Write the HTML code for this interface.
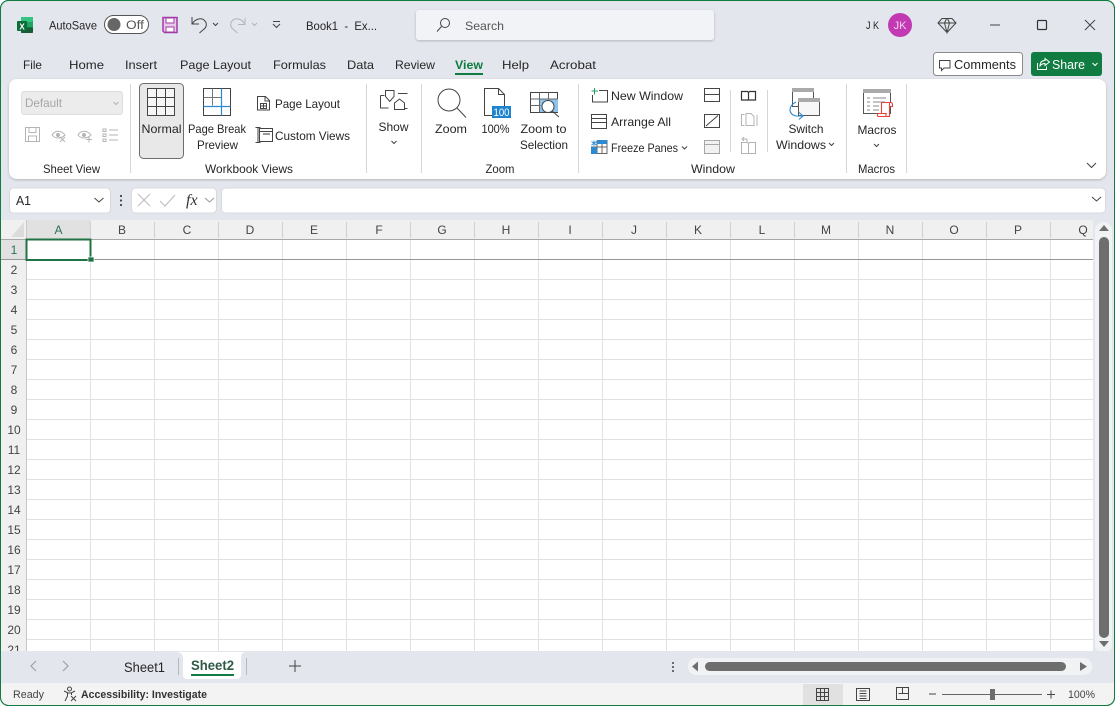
<!DOCTYPE html>
<html><head><meta charset="utf-8"><style>
html,body{margin:0;padding:0;width:1115px;height:706px;overflow:hidden;background:#fff}
svg{display:block}
text{font-family:"Liberation Sans",sans-serif;font-size:12px;fill:#262626}
.c{text-anchor:middle}
.g text{fill:#444;font-size:12px;text-anchor:middle}
.i{fill:none;stroke:#444;stroke-width:1}
.d{fill:none;stroke:#b4b4b4;stroke-width:1}
</style></head><body>
<svg width="1115" height="706" viewBox="0 0 1115 706" xmlns="http://www.w3.org/2000/svg">
<defs>
<filter id="s" x="-2%" y="-5%" width="104%" height="112%"><feDropShadow dx="0" dy="1" stdDeviation="1.2" flood-color="#000" flood-opacity=".22"/></filter>
<pattern id="gv" x="26" y="0" width="64" height="20" patternUnits="userSpaceOnUse"><rect x="0" y="0" width="1" height="20" fill="#e1e1e1"/></pattern>
<pattern id="gh" x="0" y="239" width="64" height="20" patternUnits="userSpaceOnUse"><rect x="0" y="0" width="64" height="1" fill="#e1e1e1"/></pattern>
</defs>
<rect x=".5" y=".5" width="1114" height="705" rx="8" fill="#e3e6ec" stroke="#107c41"/>

<!-- title bar -->
<rect x="21" y="17" width="12" height="16" rx="1" fill="#107c41"/><rect x="21" y="17" width="12" height="5" rx="1" fill="#33c481"/><rect x="27" y="22" width="6" height="5" fill="#21a366"/><rect x="21" y="28" width="12" height="5" rx="1" fill="#185c37"/>
<rect x="17" y="21" width="10" height="10" rx="1" fill="#0e6b3a"/>
<text x="22" y="29.500" class="c" style="font-size:8px;font-weight:bold;fill:#fff">X</text>
<text x="49" y="29.500" textLength="48" lengthAdjust="spacingAndGlyphs">AutoSave</text>
<rect x="104.500" y="15.500" width="44" height="18" rx="9" fill="#fff" stroke="#555"/><circle cx="114" cy="24.500" r="6.500" fill="#666"/>
<text x="126" y="29" textLength="18" lengthAdjust="spacingAndGlyphs" style="font-size:11.500px;fill:#555">Off</text>
<path d="M163 17.500h14l0 15h-12.500l-1.500-1.500z" fill="#e8c9ec" stroke="#a03aa8" stroke-width="1.500"/><rect x="166" y="18" width="8" height="5" fill="#fff" stroke="#a03aa8"/><rect x="166" y="27" width="8" height="5" fill="#fff" stroke="#a03aa8"/>
<path d="M192 17v7h7M192.500 23.500c3-5 9-6 12-3 3 3 2 7-1 9l-4 3.500" class="i" stroke-width="1.200"/>
<path d="M213 23l2.500 2.500 2.500-2.500" class="i"/>
<path d="M245 18v6.500h-7M244.500 23.500c-3-5-9-6-12-3-3 3-2 7 1 9l4 3.500" class="d" stroke-width="1.200"/>
<path d="M252 23l2.500 2.500 2.500-2.500" class="d"/>
<path d="M273 21.500h7M273 24l3.500 3.500 3.500-3.500" class="i"/>
<text x="306" y="30" textLength="71" lengthAdjust="spacingAndGlyphs">Book1&#160;&#160;-&#160;&#160;Ex...</text>
<rect x="416" y="10" width="298" height="30" rx="3" fill="#f1f3f6" filter="url(#s)"/>
<circle cx="445" cy="23" r="4.500" class="i"/><path d="M441.500 26.500l-4.500 5" class="i"/>
<text x="465" y="30" textLength="39" lengthAdjust="spacingAndGlyphs" style="fill:#555">Search</text>
<text x="866" y="29" textLength="13" lengthAdjust="spacingAndGlyphs" style="font-size:11px">J K</text>
<circle cx="900" cy="25" r="12" fill="#c239b3"/><text x="900" y="29" class="c" style="font-size:11px;fill:#f3d4ef">JK</text>
<path d="M942 18.500h10l4 4.500-9 9.500-9-9.500zM938 23h18M944.500 23l2.500 9.500 2.500-9.500M944.500 23l2-4.500h1l2 4.500" class="i" stroke="#333"/>
<path d="M990 25h10" class="i" stroke-width="1.200"/>
<rect x="1037.500" y="20.500" width="9" height="9" rx="1" fill="none" stroke="#333" stroke-width="1.200"/>
<path d="M1085 20l10 10M1095 20l-10 10" class="i" stroke-width="1.100"/>

<!-- tabs -->
<g style="font-size:13px">
<text x="23" y="69" textLength="19" lengthAdjust="spacingAndGlyphs">File</text>
<text x="69" y="69" textLength="35" lengthAdjust="spacingAndGlyphs">Home</text>
<text x="125" y="69" textLength="32" lengthAdjust="spacingAndGlyphs">Insert</text>
<text x="180" y="69" textLength="71" lengthAdjust="spacingAndGlyphs">Page Layout</text>
<text x="273" y="69" textLength="53" lengthAdjust="spacingAndGlyphs">Formulas</text>
<text x="347" y="69" textLength="27" lengthAdjust="spacingAndGlyphs">Data</text>
<text x="395" y="69" textLength="40" lengthAdjust="spacingAndGlyphs">Review</text>
<text x="455" y="69" textLength="28" lengthAdjust="spacingAndGlyphs" style="font-weight:bold;fill:#107c41">View</text>
<text x="502" y="69" textLength="27" lengthAdjust="spacingAndGlyphs">Help</text>
<text x="550" y="69" textLength="46" lengthAdjust="spacingAndGlyphs">Acrobat</text>
</g>
<rect x="455" y="73" width="28" height="2" fill="#107c41"/>
<rect x="933.500" y="52.500" width="89" height="23" rx="3" fill="#fff" stroke="#8a8a8a"/>
<path d="M939.500 60.500h10.500v7.500h-6l-2.500 2.500v-2.500h-2z" class="i"/>
<text x="954" y="69" textLength="62" lengthAdjust="spacingAndGlyphs" style="font-size:13px">Comments</text>
<rect x="1031" y="52" width="71" height="24" rx="3" fill="#107c41"/>
<path d="M1037.500 63v6.500h9v-3M1040 66c0-4 2-5.500 5-5.500v-2l4.500 3.500-4.500 3.500v-2c-2 0-4 1-5 2.500z" fill="none" stroke="#fff"/>
<text x="1052" y="69" textLength="33" lengthAdjust="spacingAndGlyphs" style="font-size:13px;fill:#fff">Share</text>
<path d="M1092.500 63l2.500 2.500 2.500-2.500" fill="none" stroke="#fff"/>

<!-- ribbon -->
<rect x="9" y="79" width="1097" height="100" rx="8" fill="#fff" filter="url(#s)"/>
<g fill="#d6d6d6"><rect x="130" y="84" width="1" height="89"/><rect x="366" y="84" width="1" height="89"/><rect x="421" y="84" width="1" height="89"/><rect x="578" y="84" width="1" height="89"/><rect x="846" y="84" width="1" height="89"/><rect x="906" y="84" width="1" height="89"/><rect x="767" y="90" width="1" height="62"/><rect x="730" y="90" width="1" height="62"/></g>

<!-- sheet view -->
<rect x="21.500" y="91.500" width="101" height="23" rx="3" fill="#ececec" stroke="#dcdcdc"/>
<text x="25" y="107" textLength="37" lengthAdjust="spacingAndGlyphs" style="fill:#a6a6a6">Default</text>
<path d="M113.500 102l2.500 2.500 2.500-2.500" class="d"/>
<path d="M25.500 127.500h14v14h-14zM29 127.500v5h7v-5M28.500 141.500v-5.500h8v5.500" class="d" stroke-width="1.100"/>
<path d="M52 135c3-5 9-5 13 0-4 4-10 4-13 0z" class="d"/><circle cx="58" cy="135" r="2" fill="#b4b4b4"/><path d="M60 137l5 5M65 137l-5 5" class="d"/>
<path d="M78 135c3-5 9-5 13 0-4 4-10 4-13 0z" class="d"/><circle cx="84" cy="135" r="2" fill="#b4b4b4"/><path d="M89 136.500v6M86 139.500h6" class="d"/>
<path d="M103 129h3v2.500h-3zM103 134h3v2.500h-3zM103 139h3v2.500h-3zM109 130h9M109 135h9M109 140h9" class="d"/>
<text x="71.500" y="173" class="c" textLength="57" lengthAdjust="spacingAndGlyphs">Sheet View</text>

<!-- workbook views -->
<rect x="139.500" y="83.500" width="44" height="75" rx="4" fill="#e8e8e8" stroke="#6e6e6e"/>
<path d="M147.500 88.500h27v27h-27zM156.500 88.500v27M165.500 88.500v27M147.500 97.500h27M147.500 106.500h27" fill="#f6f6f6" stroke="#444"/>
<text x="161.500" y="133" class="c" textLength="40" lengthAdjust="spacingAndGlyphs">Normal</text>
<path d="M203.500 88.500h27v27h-27z" fill="#fff" stroke="#444"/>
<path d="M212.500 88.500v17M203.500 97.500h18" stroke="#777" fill="none"/><path d="M221.500 88.500v27M203.500 106.500h27" stroke="#2b8ad3" fill="none" stroke-width="1.200"/>
<text x="217" y="133" class="c" textLength="58" lengthAdjust="spacingAndGlyphs">Page Break</text>
<text x="217.500" y="149" class="c" textLength="41" lengthAdjust="spacingAndGlyphs">Preview</text>
<path d="M257.500 96.500h8l4 4v9.500h-12zM265 96.500v4.500h4.500" class="i"/><path d="M260.500 103.500h6v5h-6zM263.500 103.500v5M260.500 106h6" class="i" stroke-width=".8"/>
<text x="275" y="108" textLength="65" lengthAdjust="spacingAndGlyphs">Page Layout</text>
<path d="M255.500 127.500h5M258 127.500v15M255.500 142.500h5M263.500 128.500h9v13h-13v-13h4zM259.500 131.500h13" class="i"/><rect x="263" y="133" width="7" height="2" fill="#999"/>
<text x="275" y="140" textLength="75" lengthAdjust="spacingAndGlyphs">Custom Views</text>
<text x="249" y="173" class="c" textLength="88" lengthAdjust="spacingAndGlyphs">Workbook Views</text>

<!-- show -->
<path d="M380.500 95.500v12.500h8M380.500 95.500h4M398 93.500h9.500M407.500 108.500h-3M385.500 90.500h8.500v6l-4.250 5-4.250-5z" class="i"/>
<path d="M394.500 103l5-4 5 4v6.500h-10z" class="i"/>
<text x="393.500" y="131" class="c" textLength="30" lengthAdjust="spacingAndGlyphs">Show</text>
<path d="M391.500 141l2.500 2.500 2.500-2.500" class="i"/>

<!-- zoom -->
<circle cx="449" cy="100" r="11" class="i"/><path d="M457 108l9 9.500" class="i" stroke-width="1.200"/>
<text x="451" y="133" class="c" textLength="32" lengthAdjust="spacingAndGlyphs">Zoom</text>
<path d="M484.500 88.500h14l6 6v21h-20zM498.500 88.500v6h6" class="i"/>
<rect x="492" y="106" width="19" height="12" fill="#1f84d0"/><text x="501.500" y="116" class="c" textLength="16" lengthAdjust="spacingAndGlyphs" style="font-size:11px;fill:#fff">100</text>
<text x="495.500" y="133" class="c" textLength="28" lengthAdjust="spacingAndGlyphs">100%</text>
<path d="M530.500 92.500h27v20h-27z" fill="#fff" stroke="#444"/><rect x="539" y="99" width="19" height="13" fill="#8cc4ee"/>
<path d="M530.500 99h27M530.500 105.500h10M539.500 92.500v20M548.500 92.500v7" stroke="#666" fill="none"/>
<circle cx="548" cy="106.500" r="6" fill="#fff" stroke="#444"/><path d="M552 111l7 6" class="i"/>
<text x="543.500" y="133" class="c" textLength="46" lengthAdjust="spacingAndGlyphs">Zoom to</text>
<text x="544" y="149" class="c" textLength="48" lengthAdjust="spacingAndGlyphs">Selection</text>
<text x="500" y="173" class="c" textLength="29" lengthAdjust="spacingAndGlyphs">Zoom</text>

<!-- window -->
<path d="M599 90.500h8.500v11.500h-15v-7" class="i"/><path d="M594.500 88v6.500M591.500 91h6.500" stroke="#21a366" fill="none"/>
<text x="611" y="100" textLength="72" lengthAdjust="spacingAndGlyphs">New Window</text>
<path d="M591.500 114.500h15v14h-15zM591.500 118.500h15M591.500 122.500h15" class="i" stroke-width="1.100"/>
<text x="611" y="126" textLength="60" lengthAdjust="spacingAndGlyphs">Arrange All</text>
<path d="M597 140.500h10v13h-15.500v-7M597 140.500v13M602 140.500v13M591.500 147h15.500" fill="none" stroke="#666"/><rect x="597" y="140" width="10" height="4" fill="#2b8ad3"/><rect x="591" y="147" width="6" height="7" fill="#2b8ad3"/>
<path d="M594 140.500v5.500M591.500 141.500l5 3.500M596.500 141.500l-5 3.500" fill="none" stroke="#2b8ad3" stroke-width=".9"/>
<text x="611" y="152" textLength="67" lengthAdjust="spacingAndGlyphs">Freeze Panes</text>
<path d="M682 146.500l2.500 2.500 2.500-2.500" class="i"/>
<path d="M704.500 88.500h15v13h-15zM704.500 94.500h15" class="i" stroke-width="1.100"/>
<path d="M704.500 114.500h15v13h-15zM706 126l12-10.500" class="i" stroke-width="1.100"/>
<path d="M704.500 140.500h15v13h-15z" fill="#f2f2f2" stroke="#a6a6a6"/><path d="M704.500 144.500h15" stroke="#a6a6a6"/>
<path d="M741.500 91.500h6l1 1 1-1h6v8.500h-14zM748.500 92.500v7.500" fill="none" stroke="#333" stroke-width="1.200"/>
<path d="M744.500 114.500h-3v11h3M746 113.500h5l3 3v9h-8zM757 115v11" class="d"/>
<path d="M741.500 144v-1.500h6l1 1 1-1h6v11h-14zM748.500 143.500v10M744 141l-2-2 2-2M742 139h5v3" class="d"/>
<text x="713" y="173" class="c" textLength="44" lengthAdjust="spacingAndGlyphs">Window</text>

<!-- switch -->
<path d="M792.500 88.500h21v18h-21z" fill="#fff" stroke="#555"/><rect x="792" y="88" width="22" height="4" fill="#aaa"/>
<path d="M798.500 98.500h21v17h-21z" fill="#f7f7f7" stroke="#555"/><rect x="798" y="98" width="22" height="4" fill="#aaa"/>
<path d="M796 102c-8 4-8 12 0 14h7M799 112.500l4 3.500-4 3.500" fill="none" stroke="#2b8ad3" stroke-width="1.100"/>
<text x="806" y="133" class="c" textLength="35" lengthAdjust="spacingAndGlyphs">Switch</text>
<text x="776" y="149" textLength="50" lengthAdjust="spacingAndGlyphs">Windows</text>
<path d="M829 143l2.500 2.500 2.500-2.500" class="i"/>

<!-- macros -->
<path d="M863.500 89.500h27v24h-27z" fill="#fff" stroke="#555"/><rect x="863" y="89" width="28" height="4" fill="#aaa"/>
<path d="M867 98h3M867 102h3M867 106h3M867 110h3M873 98h13M873 102h12M873 106h6M873 110h6" stroke="#888" fill="none"/>
<path d="M881.500 113.500v-10c0-.7.500-1 1-1h8c1.500 0 2 1 2 2v2h-3M889.500 102.500v14h-11c-1.500 0-1.500-3 0-3h7.500v3" fill="#fff" stroke="#e8413c" stroke-width="1.100"/>
<text x="877" y="134" class="c" textLength="39" lengthAdjust="spacingAndGlyphs">Macros</text>
<path d="M874 144l2.500 2.500 2.500-2.500" class="i"/>
<text x="876.500" y="173" class="c" textLength="37" lengthAdjust="spacingAndGlyphs">Macros</text>
<path d="M1087 163l4.500 4.500 4.500-4.500" class="i" stroke-width="1.100"/>

<!-- formula bar -->
<rect x="9.500" y="188" width="101" height="25" rx="4" fill="#fff" stroke="#d8dade"/>
<text x="16" y="205" textLength="15" lengthAdjust="spacingAndGlyphs" style="font-size:13px">A1</text>
<path d="M94.500 198l4.500 4 4.500-4" class="i" stroke-width="1.200"/>
<circle cx="121" cy="196" r="1.100" fill="#444"/><circle cx="121" cy="200.500" r="1.100" fill="#444"/><circle cx="121" cy="205" r="1.100" fill="#444"/>
<rect x="131.500" y="188" width="85" height="25" rx="4" fill="#fff" stroke="#d8dade"/>
<path d="M138 194l12 12M150 194l-12 12" fill="none" stroke="#c0c0c0" stroke-width="1.200"/>
<path d="M160 201l5 5 10-11" fill="none" stroke="#c0c0c0" stroke-width="1.200"/>
<text x="186" y="205" style="font-family:'Liberation Serif',serif;font-style:italic;font-size:16px;fill:#333">fx</text>
<path d="M205 198l4.500 4 4.500-4" fill="none" stroke="#999"/>
<rect x="221.500" y="188" width="884" height="25" rx="4" fill="#fff" stroke="#d8dade"/>
<path d="M1092 197l4.500 4 4.500-4" class="i" stroke-width="1.200"/>

<!-- grid -->
<rect x="1" y="220" width="1092" height="432" fill="#fff"/>
<rect x="1" y="220" width="1092" height="19" fill="#f0f0f0"/>
<rect x="1" y="239" width="25" height="413" fill="#f0f0f0"/>
<rect x="26" y="239" width="1067" height="413" fill="url(#gv)"/>
<rect x="26" y="239" width="1067" height="413" fill="url(#gh)"/>
<rect x="26" y="220" width="65" height="19" fill="#e1e1e1"/>
<rect x="1" y="240" width="25" height="20" fill="#e1e1e1"/>
<g fill="#d0d0d0"><rect x="90" y="222" width="1" height="16"/><rect x="154" y="222" width="1" height="16"/><rect x="218" y="222" width="1" height="16"/><rect x="282" y="222" width="1" height="16"/><rect x="346" y="222" width="1" height="16"/><rect x="410" y="222" width="1" height="16"/><rect x="474" y="222" width="1" height="16"/><rect x="538" y="222" width="1" height="16"/><rect x="602" y="222" width="1" height="16"/><rect x="666" y="222" width="1" height="16"/><rect x="730" y="222" width="1" height="16"/><rect x="794" y="222" width="1" height="16"/><rect x="858" y="222" width="1" height="16"/><rect x="922" y="222" width="1" height="16"/><rect x="986" y="222" width="1" height="16"/><rect x="1050" y="222" width="1" height="16"/></g>
<path d="M24 222v15h-13z" fill="#dcdcdc"/>
<rect x="1" y="239" width="1092" height="1" fill="#a8a8a8"/>
<rect x="26" y="220" width="1" height="432" fill="#c8c8c8"/>
<rect x="1" y="259" width="1092" height="1" fill="#969696"/>
<g class="g">
<text x="58.500" y="234" style="fill:#2e6f57">A</text><text x="122" y="234">B</text><text x="187" y="234">C</text><text x="250" y="234">D</text><text x="314" y="234">E</text><text x="379" y="234">F</text><text x="442" y="234">G</text><text x="506" y="234">H</text><text x="570" y="234">I</text><text x="634" y="234">J</text><text x="698" y="234">K</text><text x="762" y="234">L</text><text x="826" y="234">M</text><text x="890" y="234">N</text><text x="954" y="234">O</text><text x="1018" y="234">P</text><text x="1083" y="234">Q</text>
<text x="14" y="254" style="fill:#2e6f57">1</text><text x="14" y="274">2</text><text x="14" y="294">3</text><text x="14" y="314">4</text><text x="14" y="334">5</text><text x="14" y="354">6</text><text x="14" y="374">7</text><text x="14" y="394">8</text><text x="14" y="414">9</text><text x="14" y="434">10</text><text x="14" y="454">11</text><text x="14" y="474">12</text><text x="14" y="494">13</text><text x="14" y="514">14</text><text x="14" y="534">15</text><text x="14" y="554">16</text><text x="14" y="574">17</text><text x="14" y="594">18</text><text x="14" y="614">19</text><text x="14" y="634">20</text><text x="14" y="654">21</text>
</g>
<rect x="26.500" y="239.500" width="64" height="20.500" fill="none" stroke="#217346" stroke-width="2"/>
<rect x="88" y="257" width="6" height="5" fill="#217346" stroke="#fff" stroke-width=".7"/>

<!-- vertical scrollbar -->
<rect x="1095" y="222" width="17" height="431" rx="8" fill="#f1f2f4"/>
<path d="M1099 231l5-6 5 6z" fill="#6e6e6e"/>
<rect x="1099" y="237" width="10" height="401" rx="5" fill="#6e6e6e"/>
<path d="M1099 641l5 6 5-6z" fill="#6e6e6e"/>

<!-- tab bar -->
<rect x="1" y="651" width="1113" height="32" fill="#e3e6ec"/>
<path d="M36 661l-5 5 5 5" fill="none" stroke="#a0a0a0" stroke-width="1.200"/>
<path d="M63 661l5 5-5 5" fill="none" stroke="#a0a0a0" stroke-width="1.200"/>
<text x="124" y="672" textLength="41" lengthAdjust="spacingAndGlyphs" style="font-size:14px">Sheet1</text>
<rect x="178" y="658" width="1" height="17" fill="#b8b8b8"/>
<path d="M175 652c4 0 8 1 8 6v17c0 3 2 4 4 4h49c2 0 5-1 5-4v-17c0-5 2-6 6-6z" fill="#fff"/>
<text x="191" y="670" textLength="43" lengthAdjust="spacingAndGlyphs" style="font-size:14px;font-weight:bold;fill:#2f5a46">Sheet2</text>
<rect x="191" y="674" width="43" height="2" fill="#107c41"/>
<rect x="246" y="658" width="1" height="17" fill="#b8b8b8"/>
<path d="M295 660v12M289 666h12" class="i" stroke-width="1.100"/>
<circle cx="673" cy="663" r="1" fill="#444"/><circle cx="673" cy="667" r="1" fill="#444"/><circle cx="673" cy="671" r="1" fill="#444"/>
<rect x="688" y="658" width="404" height="17" rx="8" fill="#f1f2f4"/>
<path d="M698 661.500l-6 5 6 5z" fill="#6e6e6e"/>
<rect x="705" y="662" width="361" height="9" rx="4.500" fill="#6e6e6e"/>
<path d="M1080 662v9l7-4.500z" fill="#6e6e6e"/>

<!-- status bar -->
<path d="M1 683h1113v14a8 8 0 0 1-8 8H9a8 8 0 0 1-8-8z" fill="#f3f3f3"/>
<text x="13" y="698" textLength="31" lengthAdjust="spacingAndGlyphs" style="font-size:11px;fill:#444">Ready</text>
<circle cx="69.500" cy="689" r="2" class="i" stroke-width=".9"/>
<path d="M64 691l4 2h3l4-2M67.500 693v3l-2.500 5M71.500 693v2" class="i" stroke-width=".9"/><path d="M71 696l5 5M76 696l-5 5" class="i" stroke-width=".9"/>
<text x="81" y="698" textLength="126" lengthAdjust="spacingAndGlyphs" style="font-size:11px;font-weight:bold;fill:#333">Accessibility: Investigate</text>
<rect x="803" y="684" width="40" height="21" fill="#e1e1e1"/>
<path d="M816.500 688.500h12v12h-12zM820.500 688.500v12M824.500 688.500v12M816.500 692.500h12M816.500 696.500h12" class="i" stroke-width=".9"/>
<path d="M856.500 688.500h13v12h-13z" class="i"/><path d="M859.500 691h7M859.500 693.500h7M859.500 696h7M859.500 698.500h7" stroke="#444" fill="none" stroke-width=".9"/>
<path d="M896.500 687.500h12v12h-12zM902.500 687.500v6h-4M902.500 693.500h6" class="i"/>
<path d="M929 694h7" class="i" stroke-width="1.100"/>
<rect x="942" y="694" width="100" height="1" fill="#666"/>
<rect x="990" y="689" width="5" height="11" fill="#6e6e6e"/>
<path d="M1047 694.500h8M1051 690.500v8" class="i"/>
<text x="1068" y="698" textLength="27" lengthAdjust="spacingAndGlyphs" style="font-size:11px;fill:#444">100%</text>

<rect x=".5" y=".5" width="1114" height="705" rx="8" fill="none" stroke="#107c41"/>
</svg>
</body></html>
